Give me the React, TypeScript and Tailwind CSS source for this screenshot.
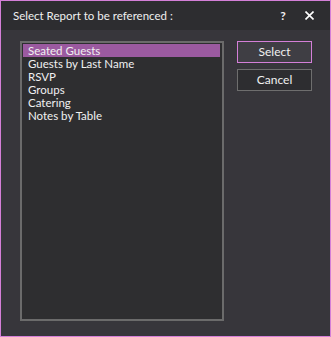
const items = [
  "Seated Guests",
  "Guests by Last Name",
  "RSVP",
  "Groups",
  "Catering",
  "Notes by Table",
];

export default function App() {
  return (
    <div
      className="w-[331px] h-[337px] flex flex-col border border-[#d47fd8] bg-[#37363b] text-[11.5px] text-[#f0f0f0]"
      style={{ fontFamily: 'Lato, "Noto Sans", sans-serif' }}
    >
      {/* Title bar */}
      <div className="h-[29px] flex items-center bg-[#2d2d30] pl-[12px]">
        <span className="flex-1">Select Report to be referenced :</span>
        <span className="w-[12px] text-center font-bold text-[12px]">?</span>
        <svg className="ml-[16px] mr-[16px]" width="9" height="9" viewBox="0 0 9 9">
          <path d="M0.5 0.5 L8.5 8.5 M8.5 0.5 L0.5 8.5" stroke="#ffffff" strokeWidth="1.6" />
        </svg>
      </div>

      {/* Body */}
      <div className="flex-1 flex pl-[19px] pt-[11px] pb-[15px]">
        <div className="w-[204px] border-2 border-[#6b6b6b] bg-[#2e2e30] p-[1px] flex flex-col">
          {items.map((item, i) => (
            <div
              key={item}
              className={`h-[13px] leading-[13px] pl-[5px] mr-[1px] ${
                i === 0 ? "bg-[#9b5aa0]" : ""
              }`}
            >
              {item}
            </div>
          ))}
        </div>
        <div className="ml-[13px] flex flex-col gap-[6px]">
          <button className="w-[75px] h-[22px] border border-[#d47fd8] bg-[#3f3e44] text-[12px] text-[#f0f0f0]">
            Select
          </button>
          <button className="w-[75px] h-[22px] border border-[#6e6e6e] bg-[#2d2d30] text-[12px] text-[#f0f0f0]">
            Cancel
          </button>
        </div>
      </div>
    </div>
  );
}
